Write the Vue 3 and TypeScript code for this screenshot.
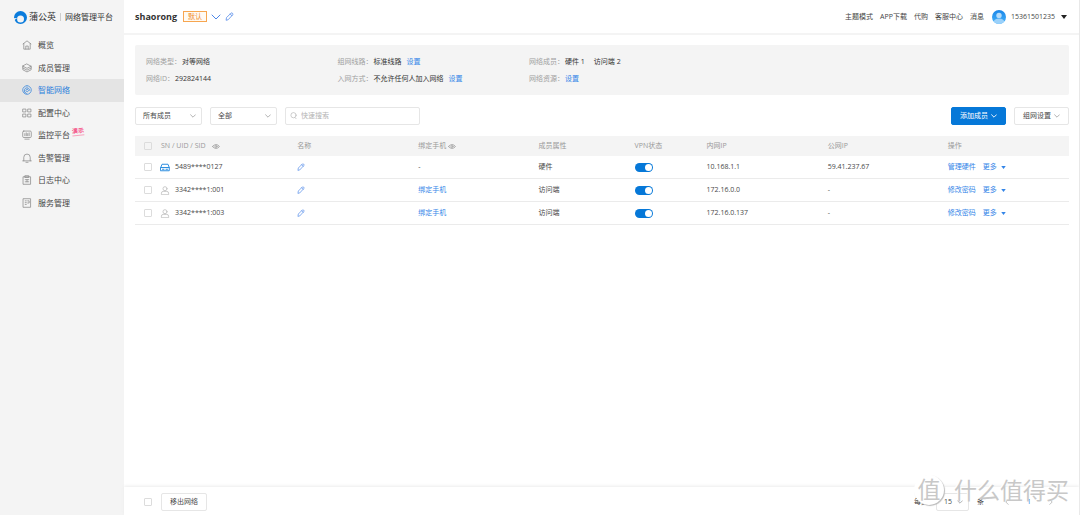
<script setup lang="ts">
import { ref } from 'vue'

interface NavItem { label: string; icon: string; active?: boolean; badge?: string }
interface Member {
  id: string
  hardware: boolean
  kind: string
  vpn: boolean
  lan: string
  wan: string
  action: string
}

const nav: NavItem[] = [
  { label: '概览', icon: 'M1.5 5.5 7 1.2l5.500 4.300M2.500 5v7.800h9V5M5.300 12.500V8.500h3.400v4' },
  { label: '成员管理', icon: 'M7 1.500 12.800 4.500 7 7.500 1.200 4.500ZM1.200 4.500v5L7 12.500l5.800-3v-5M1.200 7 7 10l5.800-3' },
  { label: '智能网络', icon: 'M7 1a6 6 0 1 0 0 12A6 6 0 1 0 7 1M4 10A3.800 3.800 0 1 1 10.800 7.500M7.200 5.800a1.800 1.800 0 1 0 .1 0M3.500 9.500 6.500 12.500', active: true },
  { label: '配置中心', icon: 'M1.500 1.500h4v4h-4ZM8.500 1.500h4v4h-4ZM1.500 8.500h4v4h-4ZM8.500 8.500h4v4h-4Z' },
  { label: '监控平台', icon: 'M2.500 1.500h9a1.500 1.500 0 0 1 1.500 1.500v6a1.500 1.500 0 0 1-1.500 1.500h-9A1.500 1.500 0 0 1 1 9V3a1.500 1.500 0 0 1 1.500-1.500ZM4 12.800h6M4 5v3M6 4v4M8 5v3M10 4v4', badge: '演示' },
  { label: '告警管理', icon: 'M2.500 11V6a4.500 4.500 0 0 1 9 0V11M1 11h12M5.500 13h3' },
  { label: '日志中心', icon: 'M2 2.500h10v10.500H2ZM4.500 1h5v2.500h-5ZM4.500 6.500h5M4.500 9.500h5M7 6.500v3' },
  { label: '服务管理', icon: 'M2 1h10v12H2ZM4.500 4h1.500M4.500 6.500h1.500M4.500 9h1.500M8 4h2v3H8' },
]

const topLinks = ['主题模式', 'APP下载', '代购', '客服中心', '消息']

const members = ref<Member[]>([
  { id: '5489****0127', hardware: true, kind: '硬件', vpn: true, lan: '10.168.1.1', wan: '59.41.237.67', action: '管理硬件' },
  { id: '3342****1:001', hardware: false, kind: '访问端', vpn: true, lan: '172.16.0.0', wan: '-', action: '修改密码' },
  { id: '3342****1:003', hardware: false, kind: '访问端', vpn: true, lan: '172.16.0.137', wan: '-', action: '修改密码' },
])

const keyword = ref('')
</script>

<template>
  <div class="app">
    <aside class="sidebar">
      <div class="brand">
        <svg class="logo" viewBox="0 0 26 26">
          <circle cx="13" cy="13" r="13" fill="#0b7cdc" />
          <circle cx="13" cy="16" r="7" fill="#f4f4f4" />
          <path d="M0 14.500q4-1 7-.5l1 6-4 5-5-2Z" fill="#f4f4f4" />
          <path d="M1.500 18q2-3 5-3.500-1.500 4 1.500 8l-2 1.500q-3-2-4.500-6Z" fill="#0b7cdc" />
        </svg>
        <span class="name">蒲公英</span>
        <span class="product">网络管理平台</span>
      </div>
      <nav class="menu">
        <a v-for="item in nav" :key="item.label" href="#" :class="{ active: item.active }">
          <svg viewBox="0 0 14 14"><path :d="item.icon" /></svg>
          <span>{{ item.label }}</span>
          <em v-if="item.badge">{{ item.badge }}</em>
        </a>
      </nav>
    </aside>

    <div class="content">
      <header class="topbar">
        <h1>shaorong</h1>
        <span class="tag">默认</span>
        <button class="icon-btn" aria-label="切换网络">
          <svg class="chev-big" viewBox="0 0 10 6"><path d="M1 1l4 4 4-4" /></svg>
        </button>
        <button class="icon-btn" aria-label="编辑名称">
          <svg class="pencil big" viewBox="0 0 12 12"><path d="M1.500 10.500 2 7.500 8 1.500q1-.8 2 .2t.3 2L4.500 10ZM7 2.700l2.300 2.300" /></svg>
        </button>
        <nav class="links">
          <a v-for="link in topLinks" :key="link" href="#">{{ link }}</a>
          <button class="user">
            <svg class="avatar" viewBox="0 0 26 26">
              <defs>
                <linearGradient id="face" x1="0" y1="0" x2="0" y2="1">
                  <stop offset="0" stop-color="#1a86e8" /><stop offset="1" stop-color="#45b2fa" />
                </linearGradient>
                <clipPath id="disc"><circle cx="13" cy="13" r="13" /></clipPath>
              </defs>
              <g clip-path="url(#disc)">
                <rect width="26" height="26" fill="url(#face)" />
                <circle cx="13" cy="10" r="5" fill="#b5dcfb" />
                <path d="M3 23q1-7 10-7t10 7l-3 3H6Z" fill="#9bd1fa" />
              </g>
            </svg>
            <span>15361501235</span>
            <svg class="caret dark" viewBox="0 0 6 4"><path d="M0 0h6L3 4Z" /></svg>
          </button>
        </nav>
      </header>

      <main>
        <dl class="info">
          <div><dt>网络类型：</dt><dd>对等网络</dd></div>
          <div><dt>组网线路：</dt><dd>标准线路</dd><dd><a href="#">设置</a></dd></div>
          <div><dt>网络成员：</dt><dd>硬件 1</dd><dd class="second">访问端 2</dd></div>
          <div><dt>网络ID：</dt><dd>292824144</dd></div>
          <div><dt>入网方式：</dt><dd>不允许任何人加入网络</dd><dd><a href="#">设置</a></dd></div>
          <div><dt>网络资源：</dt><dd><a href="#">设置</a></dd></div>
        </dl>

        <div class="filters">
          <div class="select">
            <select aria-label="成员范围"><option>所有成员</option></select>
            <svg class="chev" viewBox="0 0 10 6"><path d="M1 1l4 4 4-4" /></svg>
          </div>
          <div class="select">
            <select aria-label="状态"><option>全部</option></select>
            <svg class="chev" viewBox="0 0 10 6"><path d="M1 1l4 4 4-4" /></svg>
          </div>
          <label class="search">
            <svg viewBox="0 0 12 12"><circle cx="6" cy="5.500" r="4.500" /><path d="M8.500 9.500l2 2" /></svg>
            <input v-model="keyword" type="text" placeholder="快速搜索" aria-label="快速搜索">
          </label>
          <div class="actions">
            <button class="btn primary">添加成员<svg class="chev" viewBox="0 0 10 6"><path d="M1 1l4 4 4-4" /></svg></button>
            <button class="btn">组网设置<svg class="chev" viewBox="0 0 10 6"><path d="M1 1l4 4 4-4" /></svg></button>
          </div>
        </div>

        <table>
          <colgroup>
            <col class="c-check"><col class="c-id"><col class="c-wide"><col class="c-mid"><col class="c-kind">
            <col class="c-vpn"><col class="c-wide"><col class="c-mid"><col class="c-wide">
          </colgroup>
          <thead>
            <tr>
              <th><input type="checkbox" class="check" aria-label="全选"></th>
              <th>SN / UID / SID
                <svg class="eye" viewBox="0 0 16 10"><path d="M1 5q7-8 14 0-7 8-14 0Z" /><circle cx="8" cy="5" r="2" /></svg>
              </th>
              <th>名称</th>
              <th>绑定手机
                <svg class="eye near" viewBox="0 0 16 10"><path d="M1 5q7-8 14 0-7 8-14 0Z" /><circle cx="8" cy="5" r="2" /></svg>
              </th>
              <th>成员属性</th>
              <th>VPN状态</th>
              <th>内网IP</th>
              <th>公网IP</th>
              <th>操作</th>
            </tr>
          </thead>
          <tbody>
            <tr v-for="m in members" :key="m.id">
              <td><input type="checkbox" class="check" :aria-label="m.id"></td>
              <td>
                <div class="device">
                  <svg v-if="m.hardware" class="router" viewBox="0 0 20 16"><path d="M1.500 8 4 1.500h12L18.500 8v6.500h-17ZM1.500 8h17M5 11.500h3M12 11.500h3" /></svg>
                  <svg v-else class="person" viewBox="0 0 20 20"><circle cx="10" cy="6" r="4.500" /><path d="M2 18.500v-2.500q0-4 4-4h8q4 0 4 4v2.500Z" /></svg>
                  <span>{{ m.id }}</span>
                </div>
              </td>
              <td>
                <button class="icon-btn" aria-label="编辑名称">
                  <svg class="pencil" viewBox="0 0 12 12"><path d="M1.500 10.500 2 7.500 8 1.500q1-.8 2 .2t.3 2L4.500 10ZM7 2.700l2.300 2.300" /></svg>
                </button>
              </td>
              <td><span v-if="m.hardware">-</span><a v-else href="#">绑定手机</a></td>
              <td>{{ m.kind }}</td>
              <td><input v-model="m.vpn" type="checkbox" class="toggle" :aria-label="`VPN ${m.id}`"></td>
              <td>{{ m.lan }}</td>
              <td>{{ m.wan }}</td>
              <td>
                <div class="ops">
                  <a href="#">{{ m.action }}</a>
                  <a href="#" class="more">更多<svg class="caret" viewBox="0 0 6 4"><path d="M0 0h6L3 4Z" /></svg></a>
                </div>
              </td>
            </tr>
          </tbody>
        </table>
      </main>

      <footer class="bottom">
        <input type="checkbox" class="check" aria-label="全选成员">
        <button class="btn">移出网络</button>
        <div class="pager">
          <span>每页</span>
          <div class="select small">
            <select aria-label="每页条数"><option>15</option></select>
            <svg class="chev" viewBox="0 0 10 6"><path d="M1 1l4 4 4-4" /></svg>
          </div>
          <span>条</span>
          <div class="pages">
            <button class="page" aria-label="上一页"><svg viewBox="0 0 6 10"><path d="M5 1 1 5l4 4" /></svg></button>
            <button class="page current">1</button>
            <button class="page" aria-label="下一页"><svg viewBox="0 0 6 10"><path d="M1 1l4 4-4 4" /></svg></button>
          </div>
        </div>
      </footer>
    </div>

    <div class="watermark"><span class="seal">值</span><span>什么值得买</span></div>
  </div>
</template>

<style>
body {
  margin: 0;
  background: #fff;
}
</style>

<style scoped>
* { box-sizing: border-box; }
.app {
  position: relative;
  display: flex;
  min-height: 100vh;
  font: 7px/12px "Open Sans", "Noto Sans CJK SC", sans-serif;
  color: #484848;
}
a { color: #3385e8; text-decoration: none; }
button, input, select { font: inherit; color: inherit; margin: 0; }
button { cursor: pointer; }
svg { display: block; flex: none; fill: none; stroke: currentColor; stroke-linecap: round; stroke-linejoin: round; }

.sidebar { flex: none; width: 124px; background: #f4f4f4; }
.brand { display: flex; align-items: center; height: 34px; padding-left: 14px; color: #333; white-space: nowrap; }
.logo { width: 13px; height: 13px; stroke: none; margin-right: 2px; }
.name { font-size: 9px; }
.product { margin-left: 4px; padding-left: 4px; border-left: 1px solid #ccc; font-size: 8px; line-height: 8px; }
.menu { display: grid; grid-auto-rows: 1fr; height: 180px; }
.menu a { display: flex; align-items: center; gap: 6px; padding-left: 22px; font-size: 8px; color: #444; }
.menu svg { width: 10px; height: 10px; color: #858585; }
.menu .active { background: #e4e4e4; color: #2b80dc; }
.menu .active svg { color: #2b80dc; }
.menu em {
  align-self: flex-start;
  margin: 3px 0 0 -4px;
  font-size: 6px;
  line-height: 8px;
  font-style: normal;
  font-weight: 700;
  color: #f5487f;
  border-bottom: 1px solid #f7a3bd;
  transform: rotate(-6deg);
}

.content { flex: 1; display: flex; flex-direction: column; min-width: 0; border-right: 1px solid #e8e8e8; }
.topbar { display: flex; align-items: center; height: 35px; padding: 0 12px 0 11px; border-bottom: 2px solid #f4f4f4; white-space: nowrap; }
h1 { margin: 0; font-size: 9px; line-height: 14px; font-weight: 700; color: #333; }
.tag { margin: 0 4px 0 6px; padding: 0 4px; border: 1px solid #f7a650; background: #fffaf3; color: #f08c2c; line-height: 9px; font-size: 7px; }
.icon-btn { display: block; padding: 0; border: 0; background: none; color: #4c86e8; }
.chev-big { width: 10px; height: 6px; margin-right: 4px; }
.pencil { width: 8px; height: 8px; }
.pencil.big { width: 9px; height: 9px; }
.links { display: flex; align-items: center; gap: 7px; margin-left: auto; }
.links a { color: #444; }
.user { display: flex; align-items: center; gap: 5px; padding: 0 0 0 1px; border: 0; background: none; }
.avatar { width: 14px; height: 14px; stroke: none; }
.caret { width: 5px; height: 3px; fill: currentColor; stroke: none; }
.caret.dark { width: 6px; height: 4px; color: #222; margin-left: 1px; }

main { flex: 1; padding: 10px 10px 0 11px; }
.info {
  display: grid;
  grid-template-columns: 21% 21% 1fr;
  row-gap: 5px;
  margin: 0;
  padding: 11px 11px 10px;
  background: #f4f4f4;
  border-radius: 2px;
}
.info div { display: flex; gap: 1px; white-space: nowrap; }
.info dt { color: #a0a0a0; }
.info dd { margin: 0; color: #333; }
.info dd + dd { margin-left: 4px; }
.info dd + .second { margin-left: 8px; }

.filters { display: flex; align-items: center; gap: 8px; margin: 11px 0; height: 19px; }
.select { position: relative; display: flex; align-items: center; width: 67px; height: 18px; border: 1px solid #e6e6e6; border-radius: 2px; }
.select select { appearance: none; width: 100%; height: 100%; padding: 0 14px 0 7px; border: 0; background: none; outline: 0; }
.select .chev { position: absolute; right: 5px; pointer-events: none; }
.chev { width: 6px; height: 4px; color: #aaa; stroke-width: 1.5; }
.search { display: flex; align-items: center; gap: 4px; width: 135px; height: 18px; padding: 0 4px; border: 1px solid #e6e6e6; border-radius: 2px; color: #aaa; }
.search svg { width: 7px; height: 7px; }
.search input { flex: 1; min-width: 0; padding: 0; border: 0; outline: 0; background: none; color: #444; }
.search input::placeholder { color: #b4b4b4; opacity: 1; }
.actions { display: flex; gap: 8px; margin-left: auto; }
.btn { display: flex; align-items: center; gap: 3px; height: 18px; padding: 0 8px; border: 1px solid #e6e6e6; border-radius: 2px; background: #fff; white-space: nowrap; }
.primary { border-color: #0678d8; background: #0678d8; color: #fff; }
.primary .chev { color: #fff; }

table { width: 100%; table-layout: fixed; border-collapse: separate; border-spacing: 0; }
.c-check { width: 26px; }
.c-id { width: 136px; }
.c-wide { width: 121px; }
.c-mid { width: 120px; }
.c-kind { width: 96px; }
.c-vpn { width: 72px; }
th, td { padding: 0; text-align: left; vertical-align: middle; white-space: nowrap; font-weight: 400; }
th { height: 20px; background: #f4f4f4; color: #999; }
td { height: 23px; border-bottom: 1px solid #ebebeb; }
th:first-child, td:first-child { padding-left: 9px; }
.check { appearance: none; display: block; width: 8px; height: 8px; border: 1px solid #dcdcdc; border-radius: 1px; background: #fff; }
th .check { background: transparent; }
.eye { display: inline-block; vertical-align: middle; width: 8px; height: 5px; margin-left: 5px; color: #aaa; stroke-width: 2; }
.eye.near { margin-left: 0; }
.device { display: flex; align-items: center; gap: 5px; margin-left: -1px; }
.device svg { width: 10px; height: 9px; color: #c4c4c4; stroke-width: 2; }
.device .router { color: #2f8fe0; }
.toggle { appearance: none; display: flex; align-items: center; justify-content: flex-start; width: 18px; height: 9px; padding: 1px; border-radius: 5px; background: #ccc; cursor: pointer; }
.toggle::before { content: ""; width: 7px; height: 7px; border-radius: 50%; background: #fff; }
.toggle:checked { justify-content: flex-end; background: #0678d8; }
.ops { display: flex; gap: 7px; }
.more { display: flex; align-items: center; gap: 4px; }

.bottom { display: flex; align-items: center; gap: 9px; height: 28px; padding: 2px 17px 0 20px; box-shadow: 0 -1px 3px #ececec; }
.pager { display: flex; align-items: center; gap: 8px; margin-left: auto; white-space: nowrap; }
.select.small { width: 33px; }
.pages { display: flex; margin-left: 4px; }
.page { display: flex; align-items: center; justify-content: center; width: 22px; height: 14px; padding: 0; border: 0; background: none; color: #999; }
.page svg { width: 4px; height: 6px; }
.page.current { color: #2b80dc; }

.watermark {
  position: absolute;
  right: 11px;
  bottom: 10px;
  display: flex;
  align-items: center;
  gap: 10px;
  font-size: 23px;
  line-height: 28px;
  color: #c8c8c8;
  text-shadow: -1px -1px 0 #fff;
  pointer-events: none;
}
.seal { width: 30px; height: 30px; border-radius: 50%; background: #fff; box-shadow: 1px 1px 1px #bbb; text-align: center; }
</style>
